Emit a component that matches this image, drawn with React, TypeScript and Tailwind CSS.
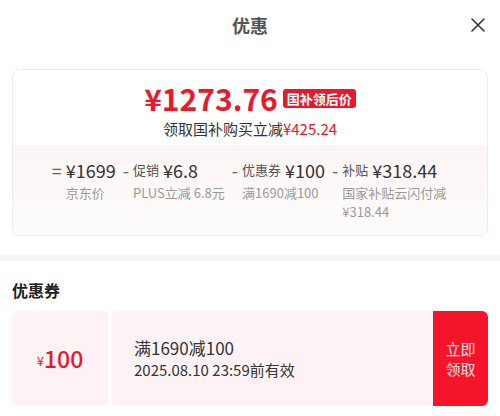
import React from "react";

const items = [
  { op: "=", label: "", value: "¥1699", note: "京东价" },
  { op: "-", label: "促销", value: "¥6.8", note: "PLUS立减 6.8元" },
  { op: "-", label: "优惠券", value: "¥100", note: "满1690减100" },
  { op: "-", label: "补贴", value: "¥318.44", note: "国家补贴云闪付减 ¥318.44" },
];

export default function App() {
  return (
    <div className="w-[500px] h-[416px] bg-white font-['Noto_Sans_CJK_SC',sans-serif] overflow-hidden">
      {/* header */}
      <div className="relative flex h-[50px] items-center justify-center">
        <span className="text-[18px] leading-6 font-bold text-[#555]">优惠</span>
        <button className="absolute right-[14px] top-[17px] text-[#333]">
          <svg width="16" height="16" viewBox="0 0 16 16" fill="none">
            <path d="M2 2L14 14M14 2L2 14" stroke="currentColor" strokeWidth="1.6" strokeLinecap="round" />
          </svg>
        </button>
      </div>

      {/* price card */}
      <div className="mx-3 mt-[19px] overflow-hidden rounded-lg border border-[#ececec]">
        <div className="flex flex-col items-center bg-white pt-3 pb-[6px]">
          <div className="flex h-8 items-center gap-[5px]">
            <span className="text-[30px] leading-8 font-semibold text-[#e8192c]">¥1273.76</span>
            <span className="rounded-[3px] bg-[#e8192c] px-[4px] text-[13px] leading-[19px] font-bold text-white">
              国补领后价
            </span>
          </div>
          <div className="mt-[5px] text-[15px] leading-5 text-[#333]">
            领取国补购买立减<span className="text-[#e8192c]">¥425.24</span>
          </div>
        </div>
        <div className="flex justify-center gap-[7px] bg-gradient-to-b from-[#fdf5f5] to-[#fefcfc] pt-[13px] pb-[14px]">
          {items.map((it, i) => (
            <div key={i} className="flex items-start gap-[4px]">
              <span className="text-[18px] leading-6 text-[#666]">{it.op}</span>
              <div>
                <div className="flex items-center gap-[4px] whitespace-nowrap leading-6">
                  {it.label && <span className="text-[13px] text-[#555]">{it.label}</span>}
                  <span className="text-[18px] text-[#333]">{it.value}</span>
                </div>
                <div
                  className={
                    i === 3
                      ? "mt-[1px] w-[106px] text-[13px] leading-[19px] text-[#999]"
                      : "mt-[1px] whitespace-nowrap text-[13px] leading-[19px] text-[#999]"
                  }
                >
                  {it.note}
                </div>
              </div>
            </div>
          ))}
        </div>
      </div>

      {/* divider band */}
      <div className="mt-[19px] h-[6px] bg-[#f5f5fa]" />

      {/* coupons */}
      <div className="px-3">
        <div className="mt-[18px] text-[16px] leading-[22px] font-bold text-[#222]">优惠券</div>
        <div className="relative mt-[10px] flex h-[95px]">
          <div className="flex w-[96px] items-center justify-center rounded-l-md bg-[#fdf2f4] text-[#e8192c]">
            <span className="mt-[4px] text-[13px]">¥</span>
            <span className="text-[23px] font-medium">100</span>
          </div>
          <div className="ml-[4px] flex flex-1 flex-col justify-center bg-[#fdf3f5] pl-[22px]">
            <div className="text-[17px] leading-[23px] text-[#333]">满1690减100</div>
            <div className="text-[15px] leading-[22px] text-[#333]">2025.08.10 23:59前有效</div>
          </div>
          <button className="flex w-[55px] flex-col items-center justify-center rounded-r-md bg-[#f5142a] text-[15px] leading-5 text-[#ffe4e6]">
            <span>立即</span>
            <span>领取</span>
          </button>
          <span className="absolute left-[95px] top-[-3px] h-[6px] w-[6px] rounded-full bg-white" />
          <span className="absolute left-[95px] bottom-[-3px] h-[6px] w-[6px] rounded-full bg-white" />
        </div>
      </div>
    </div>
  );
}
